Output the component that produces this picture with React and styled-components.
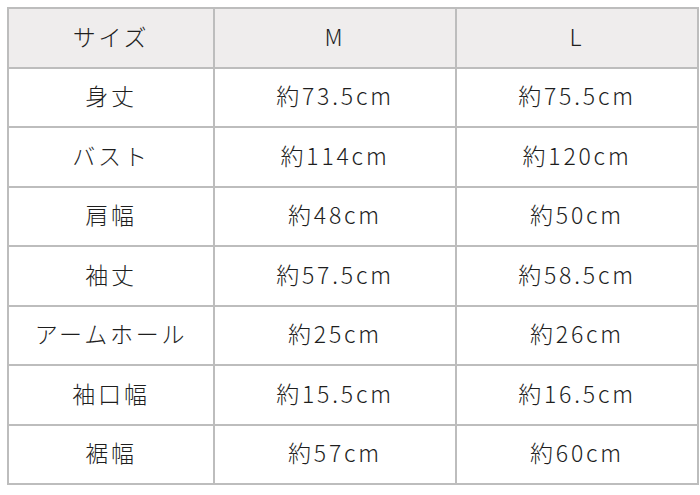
import React from "react";
import styled, { createGlobalStyle } from "styled-components";

const Global = createGlobalStyle`
  html, body { margin: 0; padding: 0; background: #fff; }
  body { font-family: "Noto Sans CJK JP", "Noto Sans", sans-serif; color: #1e1e1e; }
`;

const Wrap = styled.div`
  padding: 7px 3px 0 7px;
`;

const Table = styled.table`
  width: 690px;
  border-collapse: collapse;
  table-layout: fixed;
  border: 2px solid #bdbdbd;
`;

const Cell = styled.td`
  height: 54.5px;
  padding: 0 0 3px 0;
  border: 2px solid #bdbdbd;
  text-align: center;
  vertical-align: middle;
  font-size: 23px;
  letter-spacing: 2.8px;
  font-weight: 300;
  line-height: 1;
  background: ${(p) => (p.$head ? "#efeded" : "#fff")};
`;

const rows = [
  ["身丈", "約73.5cm", "約75.5cm"],
  ["バスト", "約114cm", "約120cm"],
  ["肩幅", "約48cm", "約50cm"],
  ["袖丈", "約57.5cm", "約58.5cm"],
  ["アームホール", "約25cm", "約26cm"],
  ["袖口幅", "約15.5cm", "約16.5cm"],
  ["裾幅", "約57cm", "約60cm"],
];

export default function App() {
  return (
    <Wrap>
      <Global />
      <Table>
        <colgroup>
          <col style={{ width: 206 }} />
          <col style={{ width: 242 }} />
          <col style={{ width: 242 }} />
        </colgroup>
        <tbody>
          <tr>
            <Cell $head>サイズ</Cell>
            <Cell $head>M</Cell>
            <Cell $head>L</Cell>
          </tr>
          {rows.map((r) => (
            <tr key={r[0]}>
              {r.map((c, i) => (
                <Cell key={i}>{c}</Cell>
              ))}
            </tr>
          ))}
        </tbody>
      </Table>
    </Wrap>
  );
}
